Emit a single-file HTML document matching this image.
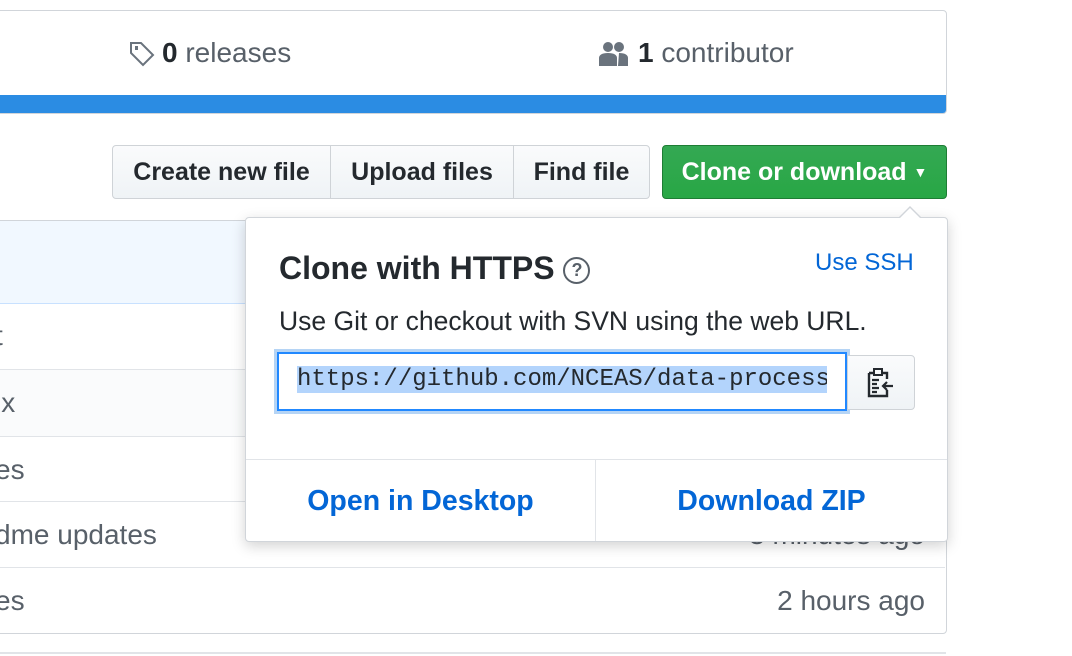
<!DOCTYPE html>
<html><head><style>
body{margin:0;width:1072px;height:656px;background:#fff;font-family:"Liberation Sans",sans-serif;position:relative;overflow:hidden;color:#24292e}
.a{position:absolute}
.btn{position:absolute;top:145px;height:52px;border:1px solid #cfd3d7;background:linear-gradient(#fafbfc,#eff3f6);font-weight:bold;font-size:25px;line-height:52px;text-align:center;color:#24292e;white-space:nowrap}
.row{position:absolute;left:-5px;width:950px;border-top:1px solid #e1e4e8;font-size:28px;color:#586069}
</style></head><body>
<div class="a" style="left:-10px;top:10px;width:955px;height:102px;border:1px solid #d1d5da;border-radius:4px;overflow:hidden">
<div class="a" style="left:0;bottom:0;width:100%;height:18px;background:#2b8ce3"></div>
</div>
<svg class="a" style="left:128px;top:40px" width="28" height="28" viewBox="0 0 28 28"><path d="M3 3h10l12 12-10 10L3 13z" fill="none" stroke="#6a737d" stroke-width="2"/><rect x="7" y="6" width="3" height="4" fill="#6a737d"/></svg>
<div class="a" style="left:162px;top:37px;font-size:28px;color:#586069"><b style="color:#24292e">0</b> releases</div>
<svg class="a" style="left:597px;top:40px" width="34" height="28" viewBox="0 0 34 28"><circle cx="11" cy="7" r="5" fill="#6a737d"/><circle cx="22" cy="7" r="5" fill="#6a737d"/><path d="M2 26v-8c0-3 3-5 9-5s9 2 9 5v8zM22 13c6 0 9 2 9 5v8H21z" fill="#6a737d"/></svg>
<div class="a" style="left:638px;top:37px;font-size:28px;color:#586069"><b style="color:#24292e">1</b> contributor</div>
<div class="btn" style="left:112px;width:217px;border-radius:4px 0 0 4px">Create new file</div>
<div class="btn" style="left:330px;width:182px">Upload files</div>
<div class="btn" style="left:513px;width:135px;border-radius:0 4px 4px 0">Find file</div>
<div class="btn" style="left:662px;width:283px;background:linear-gradient(#34a853,#28a745);border-color:#1e7d34;color:#fff;border-radius:4px">Clone or download <span style="font-size:14px;vertical-align:3px">▼</span></div>
<div class="a" style="left:-10px;top:220px;width:955px;height:412px;border:1px solid #d1d5da;border-radius:4px"></div>
<div class="a" style="left:-5px;top:221px;width:950px;height:82px;background:#f1f8ff;border-bottom:1px solid #c8e1ff"></div>
<div class="row" style="top:303px;height:66px;line-height:66px;border:0">t</div>
<div class="row" style="top:369px;height:66px;line-height:66px;background:#fafbfc">ix</div>
<div class="row" style="top:436px;height:65px;line-height:65px">es</div>
<div class="row" style="top:501px;height:66px;line-height:66px">dme updates<span style="position:absolute;right:20px">3 minutes ago</span></div>
<div class="row" style="top:567px;height:66px;line-height:66px">es<span style="position:absolute;right:20px">2 hours ago</span></div>
<div class="a" style="left:0;top:652px;width:946px;border-top:2px solid #e1e4e8"></div>
<div class="a" style="left:245px;top:217px;width:701px;height:323px;background:#fff;border:1px solid #d1d5da;border-radius:4px;box-shadow:0 4px 14px rgba(0,0,0,.18)">
<div class="a" style="left:33px;top:32px;font-size:32px;font-weight:bold;white-space:nowrap">Clone with HTTPS <span style="display:inline-block;width:23px;height:23px;border:2.5px solid #586069;border-radius:50%;font-size:18px;line-height:23px;text-align:center;vertical-align:3px;color:#586069">?</span></div>
<div class="a" style="left:569px;top:31px;font-size:24px;color:#0366d6">Use SSH</div>
<div class="a" style="left:33px;top:88px;font-size:26.5px;white-space:nowrap">Use Git or checkout with SVN using the web URL.</div>
<div class="a" style="left:31px;top:134px;width:566px;height:55px;border:2px solid #2188ff;box-shadow:0 0 0 3px #b5d4f5;background:#fff;overflow:hidden"><span class="a" style="left:18px;top:12px;font-family:'Liberation Mono',monospace;font-size:24px;background:#b3d4fc;white-space:nowrap;width:530px;overflow:hidden">https://github.com/NCEAS/data-processing</span></div>
<div class="a" style="left:601px;top:137px;width:66px;height:53px;border:1px solid #cfd3d7;border-radius:0 4px 4px 0;background:linear-gradient(#fafbfc,#eff3f6)">
<svg class="a" style="left:18px;top:12px" width="28" height="30" viewBox="0 0 28 30"><path d="M3 5h5M16 5h5v6M21 22v6H3V5" fill="none" stroke="#24292e" stroke-width="2.4"/><rect x="8" y="1" width="8" height="6" fill="none" stroke="#24292e" stroke-width="2"/><path d="M6 12h7M6 16h5M6 20h7M6 24h5M27 18H17M21 14l-4 4 4 4" fill="none" stroke="#24292e" stroke-width="2.2"/></svg></div>
<div class="a" style="left:0;top:241px;width:701px;border-top:1px solid #e1e4e8"></div>
<div class="a" style="left:349px;top:242px;height:81px;border-left:1px solid #e1e4e8"></div>
<div class="a" style="left:0;top:242px;width:349px;line-height:82px;text-align:center;font-size:28.5px;font-weight:bold;color:#0366d6">Open in Desktop</div>
<div class="a" style="left:350px;top:242px;width:351px;line-height:82px;text-align:center;font-size:28.5px;font-weight:bold;color:#0366d6">Download ZIP</div>
</div>
<div class="a" style="left:899px;top:206px;width:0;height:0;border:11px solid transparent;border-top:0;border-bottom-color:#d1d5da"></div>
<div class="a" style="left:900px;top:208px;width:0;height:0;border:10px solid transparent;border-top:0;border-bottom-color:#fff"></div>
</body></html>
